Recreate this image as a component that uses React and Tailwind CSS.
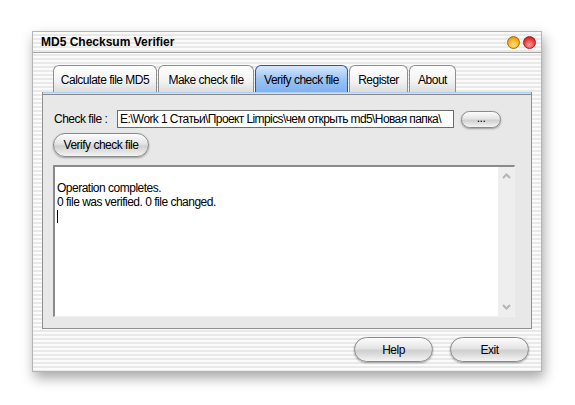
import React from 'react';

const stripes =
  'bg-[repeating-linear-gradient(to_bottom,#fbfbfb_0px,#fbfbfb_2px,#e9e9e9_2px,#e9e9e9_4px)]';

const tabs = ['Calculate file MD5', 'Make check file', 'Verify check file', 'Register', 'About'];
const tabWidths = ['w-[104px]', 'w-[96px]', 'w-[93px]', 'w-[59px]', 'w-[47px]'];

const PillButton = ({ className = '', children }) => (
  <button
    className={`flex items-center justify-center rounded-full border border-[#8a8a8a] bg-[linear-gradient(to_bottom,#fdfdfd_0%,#e4e4e4_45%,#cfcfcf_55%,#f4f4f4_100%)] text-[12px] tracking-[-0.5px] text-black shadow-[0_1px_2px_rgba(0,0,0,0.35)] ${className}`}
  >
    {children}
  </button>
);

const App = () => {
  return (
    <div className="w-[575px] h-[405px] bg-white pt-[31px] pl-[32px] font-['Liberation_Sans',Arial,sans-serif]">
      <div className={`w-[510px] h-[341px] flex flex-col border border-[#b4b4b4] ${stripes} shadow-[2px_6px_12px_rgba(0,0,0,0.35)]`}>
        {/* Title bar */}
        <div className="h-[21px] flex items-center justify-between border-b border-[#a4a4a4] pl-[8px] pr-[5px]">
          <span className="text-[12px] font-bold text-black leading-none">MD5 Checksum Verifier</span>
          <div className="flex gap-[3px]">
            <span className="w-[13px] h-[13px] rounded-full border border-[#a06a10] bg-[radial-gradient(circle_at_50%_70%,#ffe680_0%,#f7b020_55%,#d07a00_100%)]" />
            <span className="w-[13px] h-[13px] rounded-full border border-[#a02020] bg-[radial-gradient(circle_at_50%_70%,#ff9a9a_0%,#e84040_55%,#b01010_100%)]" />
          </div>
        </div>

        {/* Tabs */}
        <div className="mt-[12px] pl-[20px] flex items-end h-[27px]">
          {tabs.map((t, i) => {
            const active = i === 2;
            return (
              <div
                key={t}
                className={`${tabWidths[i]} h-[27px] mr-[1px] flex items-center justify-center rounded-t-[6px] border border-b-0 text-[12px] tracking-[-0.5px] text-black ${
                  active
                    ? 'border-[#2a4fc4] bg-[linear-gradient(to_bottom,#d8e8fd_0%,#9cc4f6_50%,#7fb0f0_100%)]'
                    : 'border-[#8f8f8f] bg-[linear-gradient(to_bottom,#ffffff_0%,#f2f2f2_60%,#dcdcdc_100%)]'
                }`}
              >
                <span className="pt-[2px]">{t}</span>
              </div>
            );
          })}
        </div>

        {/* Panel */}
        <div className="ml-[9px] w-[490px] h-[237px] bg-[#e8e8e8] border border-[#8f8f8f] border-t-0 flex flex-col">
          <div className="h-[3px] bg-[linear-gradient(to_bottom,#a9cbf5,#d3e4f9)] border-b border-[#8a8a8a]" />
          <div className="flex items-center mt-[15px] pl-[11px]">
            <span className="text-[12px] tracking-[-0.5px] text-black w-[63px]">Check file :</span>
            <div className="w-[337px] h-[18px] bg-white border border-[#6b6b6b] flex items-center pl-[2px] overflow-hidden whitespace-nowrap text-[12px] tracking-[-0.6px] text-black">
              E:\Work 1 Статьи\Проект Limpics\чем открыть md5\Новая папка\
            </div>
            <PillButton className="ml-[7px] w-[40px] h-[17px] leading-none pb-[2px]">...</PillButton>
          </div>
          <PillButton className="ml-[10px] mt-[5px] w-[96px] h-[24px]">Verify check file</PillButton>
          <div className="ml-[10px] mt-[8px] w-[462px] h-[152px] bg-white border-t-2 border-l-2 border-[#8a8a8a] border-r border-b border-r-[#f0f0f0] border-b-[#f0f0f0] flex">
            <div className="flex-1 pt-[14px] pl-[2px] text-[12px] tracking-[-0.5px] leading-[14px] text-black">
              <div>Operation completes.</div>
              <div>0 file was verified. 0 file changed.</div>
              <div className="w-[1px] h-[13px] bg-black mt-[1px]" />
            </div>
            <div className="w-[16px] bg-[#eeeeee] flex flex-col items-center justify-between pt-[6px] pb-[6px]">
              <svg width="9" height="6" viewBox="0 0 9 6" fill="none">
                <path d="M1 5 L4.5 1.5 L8 5" stroke="#b5b5b5" strokeWidth="2" />
              </svg>
              <svg width="9" height="6" viewBox="0 0 9 6" fill="none">
                <path d="M1 1 L4.5 4.5 L8 1" stroke="#b5b5b5" strokeWidth="2" />
              </svg>
            </div>
          </div>
        </div>

        {/* Bottom buttons */}
        <div className="flex justify-end gap-[17px] mt-[8px] pr-[12px]">
          <PillButton className="w-[79px] h-[25px]">Help</PillButton>
          <PillButton className="w-[79px] h-[25px]">Exit</PillButton>
        </div>
      </div>
    </div>
  );
};

export default App;
